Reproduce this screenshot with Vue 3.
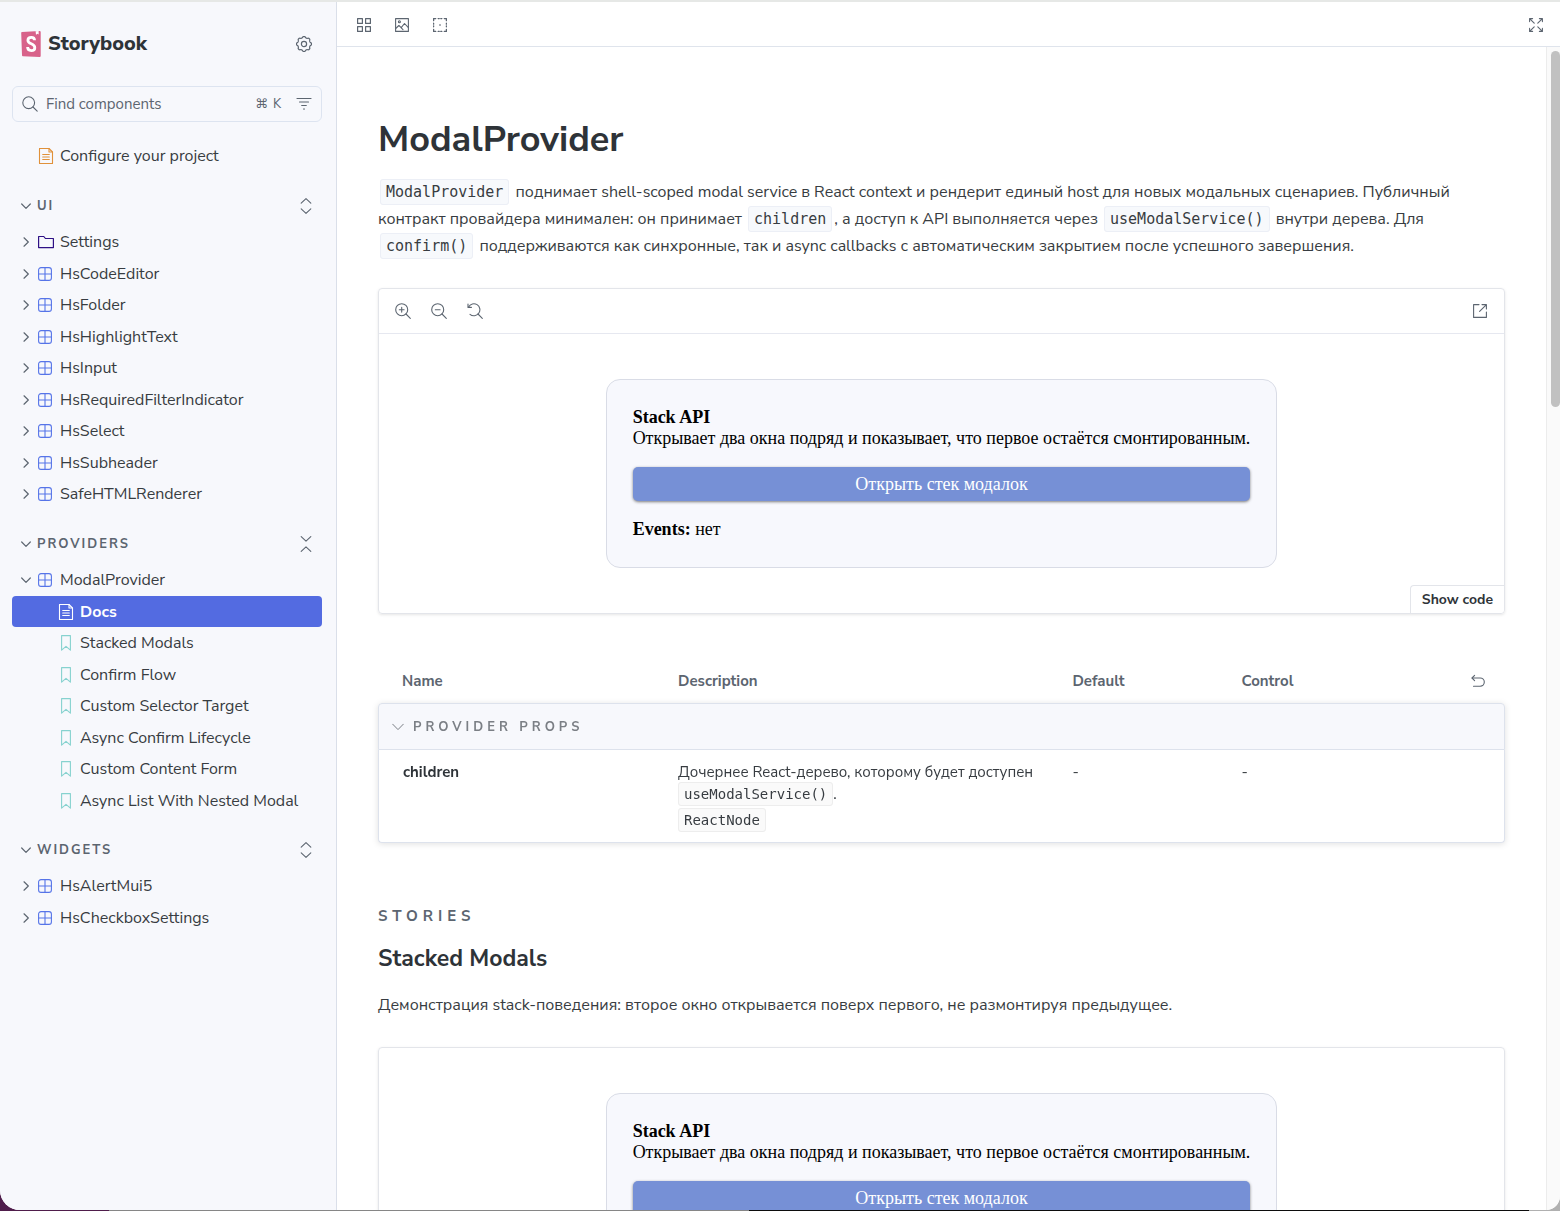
<script setup>
import { h } from 'vue'

// Wavy outline of the settings gear: eight lobes around the centre.
const gearPath = (() => {
  const points = []
  for (let i = 0; i < 96; i++) {
    const a = (i / 96) * Math.PI * 2
    const r = 6.9 + 0.6 * Math.tanh(2 * Math.cos(8 * a))
    points.push(`${(8 + r * Math.cos(a)).toFixed(2)} ${(8 + r * Math.sin(a)).toFixed(2)}`)
  }
  return `M${points.join('L')}Z`
})()

// Each entry: width, height, paths and, where it is not 1, the stroke width.
const shapes = {
  gear: [16, 16, [gearPath, 'M10.6 8a2.6 2.6 0 1 1-5.2 0a2.6 2.6 0 0 1 5.2 0Z'], 1.2],
  search: [16, 16, ['M12.6 6.7a5.9 5.9 0 1 1-11.8 0a5.9 5.9 0 0 1 11.8 0Z', 'M11 11l4.2 4.2'], 1.1],
  filter: [16, 16, ['M1 2.5h14', 'M3.5 6h9', 'M5.7 9.5h4.6', 'M7.5 13h1'], 1.1],
  document: [16, 16, ['M1.5.5h9.5l3.5 3.5v11.5h-13Z', 'M11 .5v3.5h3.5', 'M4.7 6.5h6.6M4.7 9h6.6M4.7 11.5h6.6'], 1.1],
  folder: [16, 16, ['M.6 2.5h5.2l1.6 2h8v9.1H.6Z'], 1.2],
  component: [14, 14, ['M3 .6h8a2.4 2.4 0 0 1 2.4 2.4v8a2.4 2.4 0 0 1-2.4 2.4H3A2.4 2.4 0 0 1 .6 11V3A2.4 2.4 0 0 1 3 .6Z', 'M7 .6v12.8M.6 7h12.8'], 1.1],
  bookmark: [16, 16, ['M3.6.6h8.8v14.6L8 11.4l-4.4 3.8Z'], 1.1],
  right: [10, 10, ['M3 .8L7.3 5L3 9.2'], 1.2],
  down: [10, 10, ['M.7 3L5 7.3L9.3 3'], 1.2],
  downWide: [12, 12, ['M.7 3.2L6 8.6l5.3-5.4']],
  expand: [16, 16, ['M3.2 5.2L8 .7l4.8 4.5', 'M3.2 10.8L8 15.3l4.8-4.5'], 1.1],
  collapse: [16, 16, ['M3.2.7L8 5.2L12.8.7', 'M3.2 15.3L8 10.8l4.8 4.5'], 1.1],
  grid: [14, 14, ['M.6.6h4.8v4.8h-4.8ZM8.6.6h4.8v4.8h-4.8ZM.6 8.6h4.8v4.8h-4.8ZM8.6 8.6h4.8v4.8h-4.8Z'], 1.2],
  image: [14, 14, ['M.6.6h12.8v12.8H.6Z', 'M5.4 3.8a1 1 0 1 1-2 0a1 1 0 0 1 2 0Z', 'M.7 10.5l3.2-3l2.3 2.2l3.3-4.2l3.9 4.2M6 9.6l2 2'], 1.1],
  outline: [14, 14, ['M.6 2.7V.6h2.1M5.2.6h1M7.8.6h1M11.3.6h2.1v2.1M13.4 5.2v1M13.4 7.8v1M13.4 11.3v2.1h-2.1M8.8 13.4h-1M6.2 13.4h-1M2.7 13.4H.6v-2.1M.6 8.8v-1M.6 6.2v-1', 'M6.8 7h.4'], 1.3],
  fullscreen: [14, 14, ['M.6 3.6V.6h3M.6.6l4.6 4.6M10.4.6h3v3M13.4.6L8.8 5.2M.6 10.4v3h3M.6 13.4l4.6-4.6M10.4 13.4h3v-3M13.4 13.4L8.8 8.8'], 1.1],
  zoomIn: [16, 16, ['M12.7 6.7a6 6 0 1 1-12 0a6 6 0 0 1 12 0Z', 'M11 11l4.3 4.3M6.7 4.3v4.8M4.3 6.7h4.8'], 1.1],
  zoomOut: [16, 16, ['M12.7 6.7a6 6 0 1 1-12 0a6 6 0 0 1 12 0Z', 'M11 11l4.3 4.3M4.3 6.7h4.8'], 1.1],
  zoomReset: [16, 16, ['M1.6 3.9A6 6 0 1 1 3 11.3', 'M1 1v3.4h3.4', 'M11 11l4.3 4.3'], 1.1],
  external: [14, 14, ['M6 .6H.6v12.8h12.8V8', 'M9 .6h4.4V5M13.2.8L6.6 7.4'], 1.1],
  undo: [14, 14, ['M3.6 1.4L1 4l2.6 2.6', 'M1.2 4h8a4 4 0 0 1 0 8.2H2.5'], 1.1],
}

const Icon = (props) => {
  const [width, height, paths, weight = 1] = shapes[props.name]
  const line = { fill: 'none', stroke: 'currentColor', 'stroke-width': weight, 'stroke-linecap': 'round', 'stroke-linejoin': 'round' }
  return h('svg', { width, height, viewBox: `0 0 ${width} ${height}`, 'aria-hidden': 'true' }, paths.map((d) => h('path', { d, ...line })))
}
Icon.props = ['name']

const sections = [
  {
    title: 'UI',
    toggle: 'expand',
    items: [
      { label: 'Settings', icon: 'folder' },
      ...['HsCodeEditor', 'HsFolder', 'HsHighlightText', 'HsInput', 'HsRequiredFilterIndicator', 'HsSelect', 'HsSubheader', 'SafeHTMLRenderer']
        .map((label) => ({ label, icon: 'component' })),
    ],
  },
  {
    title: 'Providers',
    toggle: 'collapse',
    items: [
      { label: 'ModalProvider', icon: 'component', open: true },
      { label: 'Docs', icon: 'document', nested: true, active: true },
      ...['Stacked Modals', 'Confirm Flow', 'Custom Selector Target', 'Async Confirm Lifecycle', 'Custom Content Form', 'Async List With Nested Modal']
        .map((label) => ({ label, icon: 'bookmark', nested: true })),
    ],
  },
  {
    title: 'Widgets',
    toggle: 'expand',
    items: ['HsAlertMui5', 'HsCheckboxSettings'].map((label) => ({ label, icon: 'component' })),
  },
]

// The demo card is the same in the primary preview and in the first story.
const StackCard = () =>
  h('div', { class: 'stack-card' }, [
    h('div', [h('strong', 'Stack API'), h('div', 'Открывает два окна подряд и показывает, что первое остаётся смонтированным.')]),
    h('button', { type: 'button' }, 'Открыть стек модалок'),
    h('div', [h('strong', 'Events:'), ' нет']),
  ])
</script>

<template>
  <div class="desktop">
    <div class="window">
      <aside class="sidebar">
        <header class="brand">
          <a href="#" class="logo">
            <svg width="20" height="26" viewBox="0 0 20 26" aria-hidden="true">
              <path d="M.2 1.9Q.2 1.2 1 1.1L18.6 0q1.1 0 1.1 1v24q0 1-1.1 1L1.9 25.2Q1 25.1 1 24.2Z" fill="#d8628a" />
              <path d="M14.6.3l3-.2l.1 3.5l-1.2-.9l-1.5 1.1Z" fill="#fff" />
              <path d="M13.6 9.2Q13.5 6.3 10.3 6.3Q6.9 6.3 6.9 9.2Q6.9 11.5 10.3 12.8Q13.8 14.2 13.8 16.7Q13.8 19.6 10.3 19.6Q6.6 19.6 6.6 16.1" fill="none" stroke="#fff" stroke-width="2.8" />
            </svg>
            <span>Storybook</span>
          </a>
          <button type="button" class="icon-button" aria-label="Settings"><Icon name="gear" /></button>
        </header>

        <div class="search">
          <label for="search" aria-label="Find components"><Icon name="search" /></label>
          <input id="search" type="text" placeholder="Find components" />
          <kbd><span>⌘</span><span>K</span></kbd>
          <button type="button" class="icon-button" aria-label="Filter"><Icon name="filter" /></button>
        </div>

        <nav>
          <a href="#" class="row root-doc"><span class="kind document"><Icon name="document" /></span>Configure your project</a>
          <section v-for="s in sections" :key="s.title">
            <div class="section-head">
              <button type="button" class="section-title"><Icon name="down" />{{ s.title }}</button>
              <button type="button" class="icon-button" :aria-label="`Toggle ${s.title}`"><Icon :name="s.toggle" /></button>
            </div>
            <ul>
              <li v-for="i in s.items" :key="i.label">
                <a href="#" class="row" :class="{ nested: i.nested, active: i.active }">
                  <span v-if="!i.nested" class="caret"><Icon :name="i.open ? 'down' : 'right'" /></span>
                  <span class="kind" :class="i.icon"><Icon :name="i.icon" /></span>{{ i.label }}
                </a>
              </li>
            </ul>
          </section>
        </nav>
      </aside>

      <main>
        <div class="toolbar">
          <div class="tools">
            <button type="button" class="icon-button" aria-label="Grid"><Icon name="grid" /></button>
            <button type="button" class="icon-button" aria-label="Background"><Icon name="image" /></button>
            <button type="button" class="icon-button" aria-label="Outline"><Icon name="outline" /></button>
          </div>
          <button type="button" class="icon-button" aria-label="Full screen"><Icon name="fullscreen" /></button>
        </div>

        <div class="viewport">
          <article>
            <h1>ModalProvider</h1>
            <p class="lead">
              <code>ModalProvider</code> поднимает shell-scoped modal service в React context и рендерит единый host для новых модальных сценариев. Публичный
              контракт провайдера минимален: он принимает <code>children</code>, а доступ к API выполняется через <code>useModalService()</code> внутри дерева. Для
              <code>confirm()</code> поддерживаются как синхронные, так и async callbacks с автоматическим закрытием после успешного завершения.
            </p>

            <div class="preview">
              <div class="preview-bar">
                <div class="preview-tools">
                  <button type="button" class="icon-button" aria-label="Zoom in"><Icon name="zoomIn" /></button>
                  <button type="button" class="icon-button" aria-label="Zoom out"><Icon name="zoomOut" /></button>
                  <button type="button" class="icon-button" aria-label="Reset zoom"><Icon name="zoomReset" /></button>
                </div>
                <button type="button" class="icon-button" aria-label="Open in new tab"><Icon name="external" /></button>
              </div>
              <div class="canvas"><StackCard /></div>
              <button type="button" class="show-code">Show code</button>
            </div>

            <table>
              <colgroup><col class="c-name" /><col class="c-description" /><col class="c-default" /><col class="c-control" /></colgroup>
              <thead>
                <tr>
                  <th>Name</th>
                  <th>Description</th>
                  <th>Default</th>
                  <th><div class="control-head">Control<button type="button" class="icon-button" aria-label="Reset controls"><Icon name="undo" /></button></div></th>
                </tr>
              </thead>
              <tbody>
                <tr class="group"><td colspan="4"><button type="button"><Icon name="downWide" />Provider props</button></td></tr>
                <tr class="prop">
                  <td><b>children</b></td>
                  <td>
                    <div>Дочернее React-дерево, которому будет доступен <code>useModalService()</code>.</div>
                    <div class="type"><code>ReactNode</code></div>
                  </td>
                  <td>-</td>
                  <td>-</td>
                </tr>
              </tbody>
            </table>

            <h2>Stories</h2>
            <h3>Stacked Modals</h3>
            <p class="story-text">Демонстрация stack-поведения: второе окно открывается поверх первого, не размонтируя предыдущее.</p>
            <div class="preview"><div class="canvas"><StackCard /></div></div>
          </article>
          <div class="scrollbar"><div class="thumb"></div></div>
        </div>
      </main>
    </div>
  </div>
</template>

<style>
body {
  margin: 0;
}

.stack-card {
  display: grid;
  gap: 18px;
  padding: 27px 26px;
  border: 1px solid #d9dce6;
  border-radius: 14px;
  background: #f7f8fd;
  color: #000;
  font: 18px/21px "Liberation Serif", serif;
}

.stack-card button {
  height: 34px;
  padding: 0;
  border: 0;
  border-radius: 5px;
  background: #7690d6;
  box-shadow: 0 1px 3px rgba(0, 0, 0, 0.5);
  color: #fff;
  font: inherit;
}
</style>

<style scoped>
.desktop {
  box-sizing: border-box;
  height: 100vh;
  padding-bottom: 1px;
  background: linear-gradient(90deg, #4f1d4b 7%, #868686 7%, #868686 48%, #0c0c0c 48%, #0c0c0c 98%, #b0b0b0 98%);
  color: #373c41;
  font: 16px/20px "Nunito Sans", Lato, sans-serif;
}

.window {
  box-sizing: border-box;
  display: flex;
  height: 100%;
  overflow: hidden;
  border-top: 2px solid #e6e8e6;
  border-radius: 0 0 14px 20px;
  background: #fff;
}

button {
  padding: 0;
  border: 0;
  background: none;
  color: inherit;
  font: inherit;
}

a {
  color: inherit;
  text-decoration: none;
}

svg {
  display: block;
  flex: none;
}

.icon-button {
  display: grid;
  place-items: center;
  width: 32px;
  height: 32px;
  color: #5c6570;
}

.sidebar {
  box-sizing: border-box;
  flex: none;
  width: 337px;
  padding: 26px 14px 0 12px;
  border-right: 1px solid #dadfe9;
  background: #f7f8fc;
}

.brand {
  display: flex;
  align-items: center;
  justify-content: space-between;
  padding: 0 2px 0 9px;
}

.logo {
  display: flex;
  align-items: center;
  gap: 7px;
  color: #2e3338;
  font-size: 20px;
  font-weight: 800;
  line-height: 22px;
}

.search {
  display: flex;
  align-items: center;
  height: 34px;
  margin-top: 26px;
  padding: 0 1px 0 9px;
  border: 1px solid #dde4f0;
  border-radius: 6px;
  color: #5c6570;
}

.search input {
  flex: 1;
  min-width: 0;
  margin-left: 8px;
  padding: 0;
  border: 0;
  outline: 0;
  background: none;
  color: inherit;
  font: inherit;
  font-size: 15px;
}

.search input::placeholder {
  color: #5c6570;
  opacity: 1;
}

kbd {
  display: flex;
  gap: 5px;
  margin-right: 7px;
  font: 13px/20px "Nunito Sans", Lato, "DejaVu Sans", sans-serif;
}

nav {
  padding-top: 18px;
}

.row {
  display: flex;
  align-items: center;
  height: 100%;
  border-radius: 4px;
}

.root-doc {
  height: 32px;
  margin-bottom: 13px;
  padding-left: 26px;
}

.caret {
  display: grid;
  place-items: center;
  width: 10px;
  margin: 0 7px 0 9px;
  color: #5c6570;
}

.kind {
  display: grid;
  place-items: center;
  width: 14px;
  margin-right: 8px;
}

.document {
  color: #e0913a;
}

.folder {
  color: #2e1085;
}

.component {
  color: #5674e8;
}

.bookmark {
  color: #86d2cf;
}

.nested {
  padding-left: 46px;
}

.active {
  background: #536be1;
  color: #fff;
  font-weight: 700;
}

.active .kind {
  color: #fff;
}

ul {
  margin: 0 0 13px;
  padding: 0;
  list-style: none;
}

li {
  height: 32px;
}

li:nth-child(even) {
  height: 31px;
}

.section-head {
  display: flex;
  align-items: center;
  justify-content: space-between;
  height: 41px;
}

.section-title {
  display: flex;
  align-items: center;
  gap: 6px;
  padding-left: 9px;
  color: #5c6570;
  font-size: 13px;
  font-weight: 700;
  letter-spacing: 2px;
  text-transform: uppercase;
}

main {
  display: flex;
  flex: 1;
  flex-direction: column;
  min-width: 0;
}

.toolbar {
  display: flex;
  align-items: center;
  justify-content: space-between;
  height: 42px;
  padding: 2px 8px 0 11px;
  border-bottom: 1px solid #dfe4ec;
}

.tools {
  display: flex;
  gap: 6px;
}

.viewport {
  display: flex;
  flex: 1;
  min-height: 0;
}

article {
  flex: 1;
  min-width: 0;
  padding: 71px 41px 0;
}

.scrollbar {
  box-sizing: border-box;
  flex: none;
  width: 14px;
  padding: 4px 0 0 4px;
  border-left: 1px solid #ececec;
  background: #fafafa;
}

.thumb {
  height: 356px;
  border-radius: 5px;
  background: #c1c1c1;
}

h1 {
  margin: 0 0 17px;
  color: #2e3338;
  font-size: 36px;
  font-weight: 700;
  line-height: 44px;
}

.lead {
  margin: 0 0 28px;
  line-height: 27px;
}

code {
  padding: 3px 5px;
  border: 1px solid #eceff6;
  border-radius: 3px;
  background: #f7f9fc;
  font: 14px/17px "DejaVu Sans Mono", monospace;
}

.lead code {
  margin: 0 2px;
  font-size: 15px;
}

.preview {
  position: relative;
  border: 1px solid #e3e5ea;
  border-radius: 4px;
  box-shadow: 0 1px 3px rgba(0, 0, 0, 0.1);
}

.preview-bar {
  display: flex;
  align-items: center;
  justify-content: space-between;
  height: 44px;
  padding: 0 8px;
  border-bottom: 1px solid #e6e8f0;
}

.preview-tools {
  display: flex;
  gap: 4px;
}

.canvas {
  display: flex;
  justify-content: center;
  padding: 45px 20px;
}

.show-code {
  position: absolute;
  right: 0;
  bottom: 0;
  height: 28px;
  padding: 0 11px;
  border: solid #e3e5ea;
  border-width: 1px 0 0 1px;
  border-radius: 4px 0 4px;
  background: #fff;
  color: #2e3338;
  font-size: 14px;
  font-weight: 700;
}

table {
  width: 100%;
  margin-top: 44px;
  border-spacing: 0;
  table-layout: fixed;
  font-size: 15px;
}

.c-name {
  width: 284px;
}

.c-description {
  width: 35%;
}

.c-default {
  width: 15%;
}

th {
  height: 45px;
  padding: 0 16px;
  color: #5c6570;
  font-weight: 700;
  text-align: left;
}

th:first-child {
  padding-left: 24px;
}

.control-head {
  display: flex;
  align-items: center;
  justify-content: space-between;
  margin-right: -5px;
}

tbody {
  filter: drop-shadow(0 1px 3px rgba(0, 0, 0, 0.12));
}

.group td {
  height: 45px;
  padding: 0 13px;
  border: 1px solid #dde2ec;
  border-radius: 4px 4px 0 0;
  background: #f7f8fc;
}

.group button {
  display: flex;
  align-items: center;
  gap: 9px;
  color: #7b7f85;
  font-size: 13px;
  font-weight: 700;
  letter-spacing: 4px;
  text-transform: uppercase;
}

.prop td {
  height: 70px;
  padding: 11px 16px;
  border-bottom: 1px solid #dde2ec;
  background: #fff;
  line-height: 22px;
  vertical-align: top;
}

.prop td:first-child {
  padding-left: 24px;
  border-left: 1px solid #dde2ec;
  border-radius: 0 0 0 4px;
}

.prop td:last-child {
  border-right: 1px solid #dde2ec;
  border-radius: 0 0 4px;
}

.prop b {
  color: #2e3338;
}

.prop code {
  border-color: #ededed;
  background: #fafafa;
}

.type {
  margin-top: 4px;
}

h2 {
  margin: 63px 0 20px;
  color: #5c6570;
  font-size: 15px;
  font-weight: 700;
  letter-spacing: 5px;
  line-height: 20px;
  text-transform: uppercase;
}

h3 {
  margin: 0;
  color: #2e3338;
  font-size: 23px;
  font-weight: 700;
  line-height: 26px;
}

.story-text {
  margin: 20px 0 28px;
  line-height: 27px;
}
</style>
